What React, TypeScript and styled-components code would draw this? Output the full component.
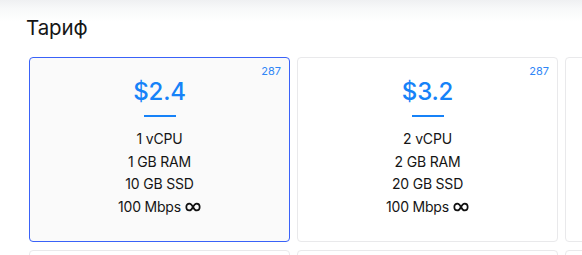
import React from "react";
import styled, { createGlobalStyle } from "styled-components";

const Global = createGlobalStyle`
  html, body { margin: 0; padding: 0; background: #ffffff; }
  body { font-family: Inter, "Noto Sans", Arial, sans-serif; color: #141414; overflow: hidden; }
`;

const Page = styled.div`
  width: 582px;
  height: 255px;
  overflow: hidden;
  background: linear-gradient(180deg, #eff0f2 0px, #f7f8f9 8px, #ffffff 22px);
`;

const Section = styled.section`
  padding: 16px 0 0 29px;
`;

const Title = styled.h2`
  margin: 0 0 17px -3px;
  font-size: 20.5px;
  line-height: 24px;
  font-weight: 400;
  color: #161616;
  letter-spacing: -0.1px;
`;

const Grid = styled.div`
  display: grid;
  grid-template-columns: repeat(3, 261px);
  grid-auto-rows: 185px;
  column-gap: 7px;
  row-gap: 8px;
`;

const Card = styled.div<{ $active?: boolean }>`
  position: relative;
  box-sizing: border-box;
  border: 1px solid ${(p) => (p.$active ? "#3a62f8" : "#e9e9eb")};
  border-radius: 4px;
  background: ${(p) => (p.$active ? "#fafafa" : "#ffffff")};
  display: flex;
  flex-direction: column;
  align-items: center;
  padding-top: 18px;
`;

const Count = styled.span`
  position: absolute;
  top: 6px;
  right: 8px;
  font-size: 11px;
  line-height: 14px;
  color: #2f86f6;
`;

const Price = styled.div`
  font-size: 24px;
  line-height: 32px;
  font-weight: 500;
  color: #1682f8;
  letter-spacing: -0.2px;
`;

const Bar = styled.div`
  width: 32px;
  height: 2px;
  margin-top: 7px;
  background: #1682f8;
`;

const Specs = styled.ul`
  list-style: none;
  margin: 11px 0 0;
  padding: 0;
  text-align: center;
  font-size: 14px;
  line-height: 22.6px;
  color: #151515;
  letter-spacing: -0.2px;
`;

const Spec = styled.li`
  display: flex;
  align-items: center;
  justify-content: center;
  gap: 4px;
`;

const Infinity = () => (
  <svg width="16" height="10" viewBox="0 0 16 10" aria-hidden="true">
    <path
      d="M8 5 C6.7 2.4 5.6 1.6 4.3 1.6 C2.5 1.6 1.3 3.1 1.3 5 C1.3 6.9 2.5 8.4 4.3 8.4 C5.6 8.4 6.7 7.6 8 5 C9.3 2.4 10.4 1.6 11.7 1.6 C13.5 1.6 14.7 3.1 14.7 5 C14.7 6.9 13.5 8.4 11.7 8.4 C10.4 8.4 9.3 7.6 8 5 Z"
      fill="none"
      stroke="#111"
      strokeWidth="1.7"
    />
  </svg>
);

type Plan = { price: string; cpu: number; ram: number; ssd: number; count: number };

const plans: Plan[] = [
  { price: "$2.4", cpu: 1, ram: 1, ssd: 10, count: 287 },
  { price: "$3.2", cpu: 2, ram: 2, ssd: 20, count: 287 },
  { price: "$4.8", cpu: 2, ram: 4, ssd: 40, count: 287 },
  { price: "$6.4", cpu: 4, ram: 4, ssd: 40, count: 287 },
  { price: "$8.0", cpu: 4, ram: 8, ssd: 60, count: 287 },
  { price: "$9.6", cpu: 6, ram: 8, ssd: 80, count: 287 },
];

export default function App() {
  return (
    <>
      <Global />
      <Page>
        <Section>
          <Title>Тариф</Title>
          <Grid>
            {plans.map((p, i) => (
              <Card key={i} $active={i === 0}>
                <Count>{p.count}</Count>
                <Price>{p.price}</Price>
                <Bar />
                <Specs>
                  <Spec>{p.cpu} vCPU</Spec>
                  <Spec>{p.ram} GB RAM</Spec>
                  <Spec>{p.ssd} GB SSD</Spec>
                  <Spec>
                    100 Mbps <Infinity />
                  </Spec>
                </Specs>
              </Card>
            ))}
          </Grid>
        </Section>
      </Page>
    </>
  );
}
